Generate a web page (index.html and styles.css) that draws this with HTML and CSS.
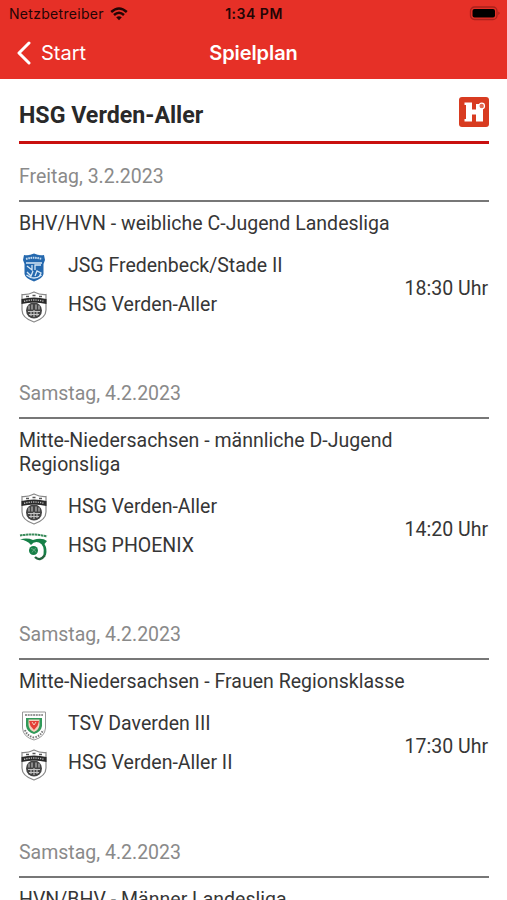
FILE: index.html
```html
<!DOCTYPE html>
<html lang="de">
<head>
<meta charset="utf-8">
<title>Spielplan</title>
<link rel="stylesheet" href="styles.css">
</head>
<body>
<svg class="defs" aria-hidden="true">
  <symbol id="verden" viewBox="0 0 28 32">
    <path d="M2 3.500Q8 4 14 1Q20 4 26 3.500V19Q26 27 14 31Q2 27 2 19Z" fill="#fff" stroke="#888" stroke-width="1.200"/>
    <path d="M6 5.500h3M12.500 4.500h3M19 5.500h3" stroke="#555" stroke-width="1.600"/>
    <path d="M1.500 8Q14 5 26.500 8V13Q14 10 1.500 13Z" fill="#292929"/>
    <path d="M4 10.300Q14 7.700 24 10.300" fill="none" stroke="#bbb" stroke-width="1.400" stroke-dasharray="1.300 1"/>
    <circle cx="14" cy="19.500" r="8" fill="#444"/>
    <path d="M9 14.500v4M12 13.500v5M16 13.500v5M19 14.500v4M8 20.500h12M9 23.500h10M11 21v4M14 19v7M17 21v4" fill="none" stroke="#c4c4c4" stroke-width="1.100"/>
  </symbol>
  <symbol id="fredenbeck" viewBox="0 0 28 32">
    <path d="M4 3Q9 4 14 1.500Q19 4 24 3L25 8L23.500 12V22Q23 26 14 29.500Q5 26 4.500 22V12L3 8Z" fill="#2468ae"/>
    <path d="M6 7Q14 4.500 22 7" fill="none" stroke="#c5dbef" stroke-width="2" stroke-dasharray="1.600 .7"/>
    <path d="M6 11H22M7 14l5 4V13M15 18V13h6M7 20l4 4 2-5M15 24l2-5 4 2-2 4M6.500 23Q14 29 21.500 23" fill="none" stroke="#d7e8f6" stroke-width="1.300"/>
  </symbol>
  <symbol id="phoenix" viewBox="0 0 30 32">
    <path d="M1 3.500Q15 1 28 4.500" fill="none" stroke="#3a8b5b" stroke-width="2" stroke-dasharray="2.500 .5"/>
    <path d="M1 7.500Q8 5.500 14 8Q23 5 28 9L25.500 12Q28.500 17 27 23H24.500Q26 13 20 10.500Q15 9 12 13Q8 8 1 7.500Z" fill="#168047"/>
    <circle cx="14.500" cy="18.500" r="4.500" fill="#168047"/>
    <path d="M12 16.500l3 1 2-1M13 20.500l2-3 2 3" fill="none" stroke="#75b28d" stroke-width=".8"/>
    <path d="M16 25Q21 30 26 23" fill="none" stroke="#24653e" stroke-width="2.400"/>
  </symbol>
  <symbol id="daverden" viewBox="0 0 28 32">
    <path d="M2.500 2H25.500V18Q25 27 14 30Q3 27 2.500 18Z" fill="#fff" stroke="#999" stroke-width="1"/>
    <path d="M5 5H23" stroke="#777" stroke-width="1.500" stroke-dasharray="2 .7"/>
    <path d="M6 8H22V16Q21 22 14 24Q7 22 6 16Z" fill="#309a59"/>
    <path d="M8.500 9.500H19.500V15Q19 20 14 22Q9 20 8.500 15Z" fill="#f2cfbd"/>
    <path d="M9 11h10l-1.500 5-3.500 4-3.500-4Z" fill="#e43f38"/>
    <path d="M12 12l2 3 2-3" fill="none" stroke="#f2cfbd" stroke-width="1"/>
    <path d="M5 20Q7 26 14 27.500Q21 26 23 20" fill="none" stroke="#777" stroke-width="2" stroke-dasharray="1.500 1.200"/>
  </symbol>
</svg>
<header class="topbar">
  <div class="status">
    <div class="carrier">Netzbetreiber
      <svg class="wifi" viewBox="0 0 18 14"><path d="M1.200 5Q9-2 16.800 5M4 8Q9 3.500 14 8" fill="none" stroke="#240505" stroke-width="2.500"/><path d="M6.200 10.300Q9 8 11.800 10.300L9 13.300Z" fill="#240505"/></svg>
    </div>
    <div class="clock">1:34 PM</div>
    <svg class="battery" viewBox="0 0 32 15"><rect x="1.500" y="1" width="26.500" height="12.500" rx="4" fill="none" stroke="#a9221d" stroke-width="1.300"/><rect x="3.500" y="3" width="22.500" height="8.500" rx="2" fill="#000"/><path d="M29.500 5.500q2 1.700 0 3.500Z" fill="#8d1c19"/></svg>
  </div>
  <nav class="nav">
    <a class="back"><svg class="chevron" viewBox="0 0 16 24"><path d="M14 2L4 12L14 22" fill="none" stroke="#fff" stroke-width="3" stroke-linecap="round" stroke-linejoin="round"/></svg><span>Start</span></a>
    <h1 class="title">Spielplan</h1>
    <span></span>
  </nav>
</header>
<main class="content">
  <div class="club">
    <h2 class="club-name">HSG Verden-Aller</h2>
    <svg class="logo" viewBox="0 0 30 30"><rect width="30" height="30" rx="3" fill="#d83b20"/><path d="M5.500 5.500H13V12.500H17V7H21L24 11.500V24.500H17V17.500H13V24.500H5.500V22H7V8H5.500Z" fill="#fff"/><circle cx="22.700" cy="9" r="2.800" fill="#e26b54" stroke="#fff" stroke-width="1.200"/></svg>
  </div>
  <section class="match">
    <div class="date">Freitag, 3.2.2023</div>
    <div class="league">BHV/HVN - weibliche C-Jugend Landesliga</div>
    <div class="game">
      <div class="teams">
        <div class="team"><svg class="crest"><use href="#fredenbeck"/></svg><span>JSG Fredenbeck/Stade II</span></div>
        <div class="team"><svg class="crest"><use href="#verden"/></svg><span>HSG Verden-Aller</span></div>
      </div>
      <div class="time">18:30 Uhr</div>
    </div>
  </section>
  <section class="match">
    <div class="date">Samstag, 4.2.2023</div>
    <div class="league">Mitte-Niedersachsen - männliche D-Jugend Regionsliga</div>
    <div class="game">
      <div class="teams">
        <div class="team"><svg class="crest"><use href="#verden"/></svg><span>HSG Verden-Aller</span></div>
        <div class="team"><svg class="crest"><use href="#phoenix"/></svg><span>HSG PHOENIX</span></div>
      </div>
      <div class="time">14:20 Uhr</div>
    </div>
  </section>
  <section class="match">
    <div class="date">Samstag, 4.2.2023</div>
    <div class="league">Mitte-Niedersachsen - Frauen Regionsklasse</div>
    <div class="game">
      <div class="teams">
        <div class="team"><svg class="crest"><use href="#daverden"/></svg><span>TSV Daverden III</span></div>
        <div class="team"><svg class="crest"><use href="#verden"/></svg><span>HSG Verden-Aller II</span></div>
      </div>
      <div class="time">17:30 Uhr</div>
    </div>
  </section>
  <section class="match">
    <div class="date">Samstag, 4.2.2023</div>
    <div class="league">HVN/BHV - Männer Landesliga</div>
  </section>
</main>
</body>
</html>
```

FILE: styles.css
```css
* { box-sizing: border-box; }
html, body { height: 100%; }
body {
  margin: 0;
  height: 900px;
  overflow: hidden;
  background: #fff;
  color: #363636;
  font-family: Roboto, sans-serif;
  font-size: 19.5px;
  line-height: 23.4px;
}
.defs { position: absolute; width: 0; height: 0; }
.topbar { height: 79px; background: #e63027; font-family: Inter, sans-serif; }
.status {
  display: grid;
  grid-template-columns: 1fr auto 1fr;
  align-items: center;
  height: 27px;
  padding: 0 6px 0 9px;
  color: #240505;
  font-size: 14px;
}
.carrier { display: flex; align-items: center; gap: 6px; letter-spacing: .3px; }
.wifi { width: 18px; height: 14px; }
.clock { font-weight: 600; letter-spacing: .5px; margin-right: 2px; }
.battery { width: 32px; height: 15px; justify-self: end; }
.nav {
  display: grid;
  grid-template-columns: 1fr auto 1fr;
  align-items: center;
  height: 52px;
  padding: 0 15px;
  color: #fff;
}
.back { display: flex; align-items: center; gap: 10px; font-size: 20px; }
.back span { padding-top: 1px; }
.chevron { width: 16px; height: 24px; }
.title { margin: 0; padding-top: 1px; font-size: 20px; font-weight: 600; letter-spacing: -.1px; }
.content { padding: 0 18px 0 19px; }
.club {
  display: flex;
  justify-content: space-between;
  align-items: center;
  height: 65px;
  padding-top: 4px;
  border-bottom: 3px solid #c9100f;
}
.club-name { margin: 7px 0 0; font-size: 23.2px; font-weight: 700; color: #292929; }
.logo { width: 30px; height: 30px; }
.match { padding-bottom: 58px; }
.club + .match { padding-top: 20px; }
.date { height: 38px; padding-top: 1px; border-bottom: 2px solid #777; color: #8a8a8a; }
.league { margin-top: 10px; letter-spacing: .02px; }
.game { display: flex; justify-content: space-between; align-items: center; margin-top: 11px; }
.teams { margin-bottom: -1px; }
.team { display: flex; align-items: center; gap: 19px; height: 39px; }
.crest { width: 30px; height: 32px; margin-top: 4px; }
.time { padding: 7px 1px 0 0; }
```
